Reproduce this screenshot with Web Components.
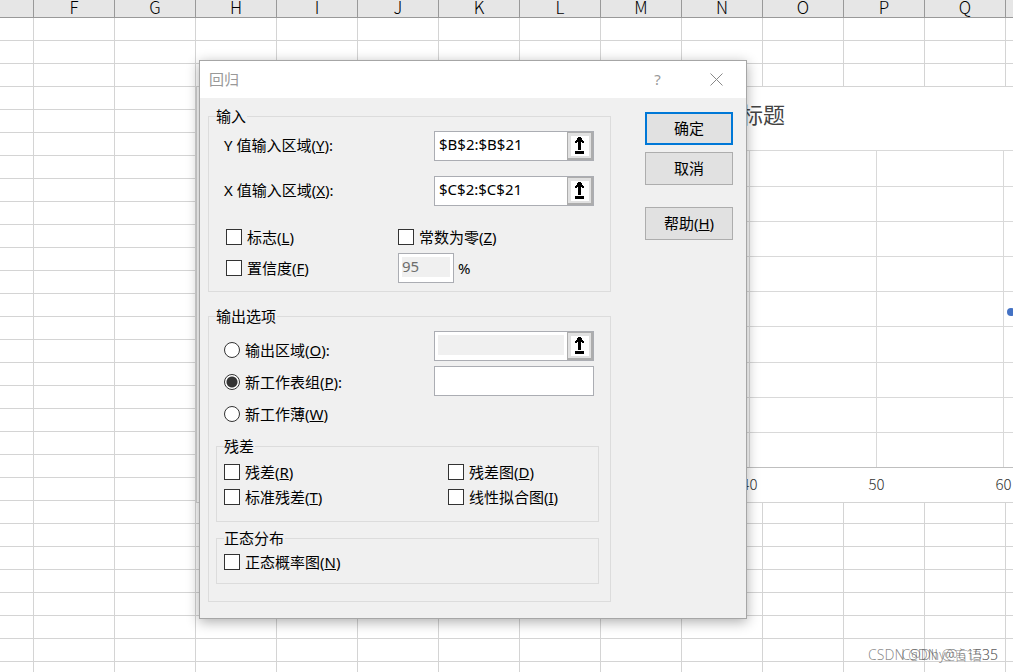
<!DOCTYPE html>
<html lang="zh-CN">
<head>
<meta charset="utf-8">
<title>回归</title>
<style>
html, body { margin: 0; height: 100%; }
body { overflow: hidden; color: #000; background: #fff; font: 15px/20px "Noto Sans", "Noto Sans CJK SC", sans-serif; }
</style>
</head>
<body>
<work-book></work-book>

<script>
const define = (name, html, setup) => {
  const template = document.createElement('template');
  template.innerHTML = html;
  customElements.define(name, class extends HTMLElement {
    constructor() {
      super();
      this.attachShadow({ mode: 'open' }).append(template.content.cloneNode(true));
    }
    connectedCallback() { if (setup) setup(this, this.shadowRoot); }
  });
};

define('sheet-grid', `
<style>
:host { display: block; }
table { width: 2059px; border-collapse: separate; border-spacing: 0; table-layout: fixed; }
col { width: 81px; }
col:first-child { width: 34px; }
th, td { box-sizing: border-box; padding: 0; border: solid #d4d4d4; border-width: 0 1px 1px 0; height: 23px; }
th { height: 18px; padding-bottom: 3px; line-height: 14px; font-family: "Noto Sans CJK SC", sans-serif; font-size: 17px; font-weight: 300; background: #e6e6e6; border-color: #999; }
</style>
<table><colgroup></colgroup><thead><tr></tr></thead><tbody></tbody></table>`, (host, root) => {
  const letters = ['', ...'FGHIJKLMNOPQRSTUVWXYZ', 'AA', 'AB', 'AC', 'AD'];
  root.querySelector('colgroup').innerHTML = '<col>'.repeat(letters.length);
  root.querySelector('thead tr').innerHTML = letters.map(l => `<th>${l}</th>`).join('');
  root.querySelector('tbody').innerHTML = ('<tr>' + '<td></td>'.repeat(letters.length) + '</tr>').repeat(60);
});

define('scatter-chart', `
<style>
:host { display: block; box-sizing: border-box; width: 1090px; background: #fff; border: 1px solid #d4d4d4; font-family: "Noto Sans CJK SC", sans-serif; font-weight: 300; color: #333; }
h2 { margin: 0; padding: 11px 0 22px; font-size: 22px; line-height: 30px; font-weight: 400; color: #444; text-align: center; }
svg { display: block; margin-left: 44px; }
.axis { display: flex; margin-left: 489px; padding: 6px 0 8px; font-size: 15px; line-height: 20px; }
.axis span { flex: 0 0 127px; text-align: center; }
</style>
<h2>图表标题</h2>
<svg width="1017" height="318" shape-rendering="crispEdges">
  <g class="lines" stroke="#d9d9d9"></g>
  <path d="M0 317.500H1017" stroke="#bfbfbf"/>
  <circle cx="770" cy="162" r="4" fill="#4472c4" shape-rendering="auto"/>
</svg>
<div class="axis"><span>40</span><span>50</span><span>60</span><span>70</span></div>`, (host, root) => {
  let d = '';
  for (const y of [0, 36, 71, 106, 141, 176, 212, 247, 282]) d += `M0 ${y + 0.5}H1017`;
  for (let i = 0; i <= 8; i++) d += `M${i * 127 + 0.5} 0V317`;
  root.querySelector('.lines').innerHTML = `<path d="${d}"/>`;
});

define('group-box', `
<style>
:host { display: block; }
fieldset { margin: 0; padding: var(--pad, 0); border: 1px solid #dcdcdc; min-width: 0; }
legend { margin-left: var(--legend, 0px); padding: 0 1px 0 0; height: 20px; }
</style>
<fieldset><legend></legend><slot></slot></fieldset>`, (host, root) => {
  root.querySelector('legend').textContent = host.getAttribute('legend');
});

define('choice-item', `
<style>
:host { display: block; }
label { display: flex; align-items: center; gap: 5px; white-space: nowrap; }
input { appearance: none; box-sizing: border-box; flex: none; margin: 0; width: 16px; height: 16px; border: 1px solid #333; background: #fff; }
input[type=radio] { border-radius: 50%; }
input[type=radio]:checked { border-color: #333; background: radial-gradient(circle, #333 0 5px, #fff 6px); }
input[type=checkbox]:checked { background: #333 content-box; padding: 3px; }
</style>
<label><input><span><slot></slot></span></label>`, (host, root) => {
  const input = root.querySelector('input');
  input.type = host.getAttribute('type') || 'checkbox';
  input.checked = host.hasAttribute('checked');
  if (input.type === 'radio') input.addEventListener('change', () => {
    for (const other of host.parentNode.querySelectorAll('choice-item'))
      if (other !== host) other.shadowRoot.querySelector('input').checked = false;
  });
});

define('text-field', `
<style>
:host { display: block; }
div { display: flex; box-sizing: border-box; height: 30px; border: 1px solid #abadb3; background: #fff; }
input { flex: 1; min-width: 0; box-sizing: border-box; height: 20px; margin: 3px; padding: 0 1px 2px; border: 0; outline: 0; background: #fff; color: #000; font: inherit; line-height: 18px; }
:host([compact]) input { padding: 0 0 2px; }
input:disabled { background: #f0f0f0; color: #6d6d6d; }
button { display: none; }
:host([picker]) button { display: flex; align-items: center; justify-content: center; box-sizing: border-box; flex: none; width: 26px; height: 28px; padding: 0; border: solid #adadad; border-width: 1px 2px 2px 1px; background: #e1e1e1; }
svg { display: block; background: #fff; }
</style>
<div><input type="text"><button type="button" aria-label="选择区域"><svg width="18" height="20" viewBox="0 0 18 20" shape-rendering="crispEdges"><path d="M7 1h3v1h1v2h1v1h1v2h-2v-1h-1v8H7V6H6v1H4V5h1V4h1V2h1zM4 15h9v3H4z"/></svg></button></div>`, (host, root) => {
  const input = root.querySelector('input');
  input.value = host.getAttribute('value') || '';
  input.disabled = host.hasAttribute('disabled');
  input.setAttribute('aria-label', host.getAttribute('label'));
});

define('push-button', `
<style>
:host { display: block; }
button { display: block; box-sizing: border-box; width: 100%; height: 33px; padding: 0 0 2px; border: 1px solid #adadad; background: #e1e1e1; color: #000; font: inherit; }
:host([primary]) button { border: 2px solid #0078d7; }
</style>
<button type="button"><slot></slot></button>`);

define('dialog-window', `
<style>
:host { display: block; box-sizing: border-box; width: 548px; border: 1px solid #a6a6a6; background: #f0f0f0; box-shadow: 0 3px 12px rgba(0,0,0,.32); }
header { display: flex; align-items: center; height: 37px; padding-left: 9px; background: #fff; color: #999; }
h1 { flex: 1; margin: 0; padding-bottom: 2px; font: inherit; }
header button { display: flex; align-items: center; justify-content: center; width: 57px; height: 37px; padding: 0 0 1px; border: 0; background: none; color: #999; font: inherit; }
header button:last-child { width: 60px; }
</style>
<header><h1></h1><button type="button" aria-label="帮助">?</button><button type="button" aria-label="关闭"><svg width="13" height="13" viewBox="0 0 13 13"><path d="M.5 .5l12 12M12.500 .5l-12 12" stroke="#888" fill="none"/></svg></button></header>
<slot></slot>`, (host, root) => {
  root.querySelector('h1').textContent = host.getAttribute('heading');
});

define('regression-form', `
<style>
:host { display: flex; justify-content: space-between; padding: 8px 13px 16px 8px; }
.groups { display: grid; gap: 14px; width: 403px; }
.input { --legend: 7px; --pad: 5px 16px 8px 0; }
.output { --legend: 0px; --pad: 5px 11px 17px 7px; }
.residual { --pad: 6px 7px 14px; }
.normal { --pad: 4px 7px 11px; }
.fields { display: grid; grid-template-columns: 1fr 160px; gap: 15px 0; align-items: center; padding-left: 15px; }
.fields span { padding-bottom: 2px; }
.checks { display: grid; grid-template-columns: 172px 56px 1fr; gap: 1px 0; grid-auto-rows: 30px; align-items: center; padding: 16px 0 0 17px; }
.checks .wide { grid-column: 2 / 4; }
.checks label { padding-left: 4px; }
.destination { display: grid; grid-template-columns: 1fr 160px; padding: 0 5px 0 8px; margin-bottom: 12px; }
.radios { display: grid; gap: 12px; padding-top: 9px; }
.targets { display: grid; grid-template-columns: minmax(0, 1fr); gap: 5px; align-content: start; }
.pair { display: grid; grid-template-columns: 224px 1fr; gap: 5px 0; }
.normal { margin-top: 6px; }
.actions { display: flex; flex-direction: column; gap: 7px; width: 88px; padding-top: 6px; }
.help { margin-top: 15px; }
</style>
<div class="groups">
  <group-box class="input" legend="输入">
    <div class="fields">
      <span>Y 值输入区域(<u>Y</u>):</span><text-field picker label="Y 值输入区域" value="$B$2:$B$21"></text-field>
      <span>X 值输入区域(<u>X</u>):</span><text-field picker label="X 值输入区域" value="$C$2:$C$21"></text-field>
    </div>
    <div class="checks">
      <choice-item>标志(<u>L</u>)</choice-item><choice-item class="wide">常数为零(<u>Z</u>)</choice-item>
      <choice-item>置信度(<u>F</u>)</choice-item><text-field compact disabled label="置信度" value="95"></text-field><label>%</label>
    </div>
  </group-box>
  <group-box class="output" legend="输出选项">
    <div class="destination">
      <div class="radios">
        <choice-item type="radio">输出区域(<u>O</u>):</choice-item>
        <choice-item type="radio" checked>新工作表组(<u>P</u>):</choice-item>
        <choice-item type="radio">新工作薄(<u>W</u>)</choice-item>
      </div>
      <div class="targets">
        <text-field picker disabled label="输出区域"></text-field>
        <text-field label="新工作表组"></text-field>
      </div>
    </div>
    <group-box class="residual" legend="残差">
      <div class="pair">
        <choice-item>残差(<u>R</u>)</choice-item><choice-item>残差图(<u>D</u>)</choice-item>
        <choice-item>标准残差(<u>T</u>)</choice-item><choice-item>线性拟合图(<u>I</u>)</choice-item>
      </div>
    </group-box>
    <group-box class="normal" legend="正态分布">
      <choice-item>正态概率图(<u>N</u>)</choice-item>
    </group-box>
  </group-box>
</div>
<div class="actions">
  <push-button primary>确定</push-button>
  <push-button>取消</push-button>
  <push-button class="help">帮助(<u>H</u>)</push-button>
</div>`);

define('work-book', `
<style>
:host { display: block; position: relative; height: 100vh; overflow: hidden; }
scatter-chart { position: absolute; left: 196px; top: 86px; }
dialog-window { position: absolute; left: 199px; top: 60px; }
.mark { position: absolute; right: 15px; bottom: 7px; font-weight: 300; font-size: 14px; color: rgba(90,90,90,.7); white-space: nowrap; }
</style>
<sheet-grid></sheet-grid>
<scatter-chart></scatter-chart>
<dialog-window heading="回归"><regression-form></regression-form></dialog-window>
<div class="mark">CSDN @Dhy@61535</div>
<div class="mark">CSDN @言语35</div>`);
</script>
</body>
</html>
